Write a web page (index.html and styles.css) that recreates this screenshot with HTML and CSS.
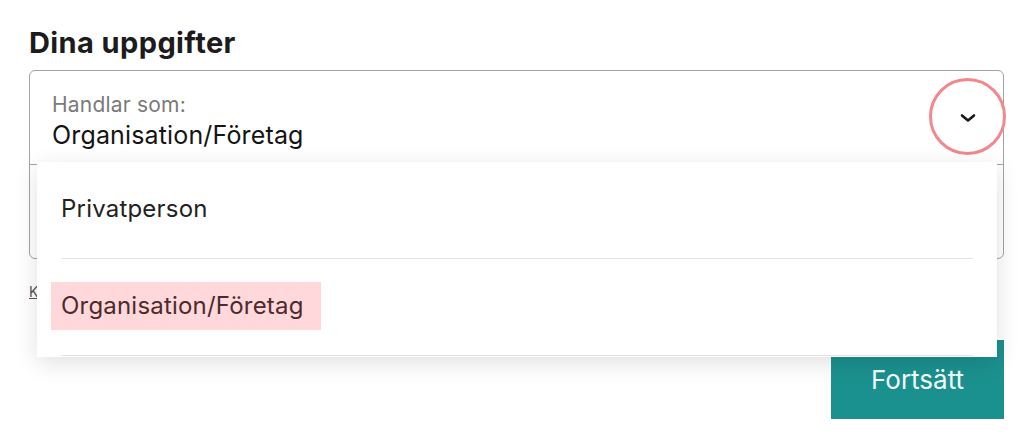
FILE: index.html
```html
<!DOCTYPE html>
<html lang="sv">
<head>
<meta charset="utf-8">
<title>Dina uppgifter</title>
<link rel="stylesheet" href="styles.css">
</head>
<body>
<main class="page">
  <h2 class="title">Dina uppgifter</h2>
  <div class="form">
    <div class="fields">
      <div class="select">
        <div class="select-text">
          <span class="select-label">Handlar som:</span>
          <span class="select-value">Organisation/Företag</span>
        </div>
        <span class="chevron-ring">
          <svg width="16" height="10" viewBox="0 0 16 10"><path d="M2 2.5 L8 7.5 L14 2.5" fill="none" stroke="#1a1a1a" stroke-width="2.6" stroke-linecap="round" stroke-linejoin="round"/></svg>
        </span>
      </div>
      <div class="field"></div>
    </div>
    <a class="link" href="#">Kom ihåg mig</a>
    <div class="actions">
      <button class="btn" type="button">Fortsätt</button>
    </div>
    <ul class="dropdown">
      <li class="option"><span class="option-text">Privatperson</span></li>
      <li class="option option-selected"><span class="option-text">Organisation/Företag</span></li>
    </ul>
  </div>
</main>
</body>
</html>
```

FILE: styles.css
```css
* { box-sizing: border-box; }
html, body { margin: 0; padding: 0; background: #fff; }
body {
  font-family: Inter, "Liberation Sans", Arial, sans-serif;
  color: #1a1a1a;
  width: 1034px;
  height: 433px;
  overflow: hidden;
}
.page {
  padding: 26px 30px 0 29px;
}
.title {
  margin: 0 0 10px 0;
  font-size: 29px;
  line-height: 34px;
  font-weight: 700;
  letter-spacing: 0.4px;
  color: #1c1c1c;
}
.form {
  position: relative;
}
.fields {
  border: 1px solid #a3a3a3;
  border-radius: 6px;
}
.select {
  height: 94px;
  border-bottom: 1px solid #a3a3a3;
  display: flex;
  align-items: flex-start;
  justify-content: space-between;
  padding: 0 0 0 22px;
}
.select-text {
  display: flex;
  flex-direction: column;
  padding-top: 22px;
}
.select-label {
  font-size: 21px;
  line-height: 24px;
  letter-spacing: 0.2px;
  color: #7a7a7a;
}
.select-value {
  margin-top: 3px;
  font-size: 25px;
  line-height: 30px;
  letter-spacing: 0.15px;
  color: #141414;
}
.chevron-ring {
  width: 77px;
  height: 77px;
  border: 3px solid #f2878d;
  border-radius: 50%;
  display: flex;
  align-items: center;
  justify-content: center;
  margin-right: -3px;
  margin-top: 7px;
}
.chevron-ring svg { display: block; margin-top: 2px; }
.field {
  height: 93px;
}
.link {
  display: inline-block;
  margin-top: 23px;
  font-size: 14px;
  line-height: 20px;
  color: #555;
  text-decoration: underline;
}
.actions {
  display: flex;
  justify-content: flex-end;
  margin-top: 38px;
}
.btn {
  width: 173px;
  height: 79px;
  border: 0;
  border-radius: 0;
  background: #1b918f;
  color: #f4fbfb;
  font-family: Inter, "Liberation Sans", sans-serif;
  font-size: 26px;
  padding: 0;
}
.dropdown {
  position: absolute;
  left: 8px;
  top: 92px;
  width: 960px;
  height: 195px;
  margin: 0;
  padding: 0;
  list-style: none;
  background: #fff;
  box-shadow: 0 6px 22px rgba(0, 0, 0, 0.12);
}
.option {
  margin: 0 24px;
  border-bottom: 1px solid #e3e3e3;
  height: 97px;
  display: flex;
  align-items: center;
}
.option-text {
  font-size: 24px;
  line-height: 30px;
  letter-spacing: 0.2px;
  color: #222;
  margin-top: -2px;
}
.option-selected .option-text {
  background: #ffd8dc;
  color: #4e2a2c;
  padding: 9px 17px 9px 10px;
  margin-left: -10px;
}
```
